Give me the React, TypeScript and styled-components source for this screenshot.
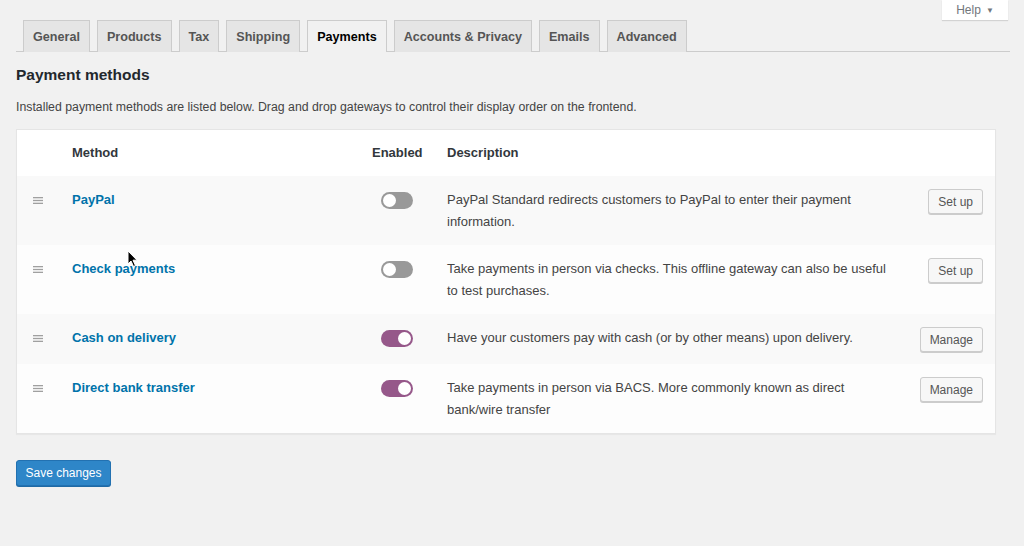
import React from "react";
import styled, { createGlobalStyle } from "styled-components";

const GlobalStyle = createGlobalStyle`
  html, body { margin: 0; padding: 0; background: #f1f1f1; }
  body {
    font-family: "Liberation Sans", Arial, sans-serif;
    font-size: 13px;
    color: #444;
    -webkit-font-smoothing: antialiased;
  }
`;

const Page = styled.div`
  position: relative;
  min-height: 546px;
  padding: 0 14px 0 16px;
  box-sizing: border-box;
`;

const TopBar = styled.div`
  display: flex;
  justify-content: flex-end;
  padding-right: 2px;
`;

const HelpTab = styled.button`
  height: 20px;
  width: 66px;
  border: none;
  background: #fff;
  box-shadow: 0 1px 1px rgba(0, 0, 0, 0.12);
  font-family: inherit;
  font-size: 12px;
  color: #72777c;
  display: flex;
  align-items: center;
  justify-content: center;
  gap: 5px;
  padding: 0;
  span { font-size: 8px; }
`;

const TabBar = styled.nav`
  display: flex;
  gap: 7px;
  padding-left: 7px;
  border-bottom: 1px solid #ccc;
  height: 31px;
`;

const Tab = styled.a<{ $active?: boolean }>`
  display: block;
  height: 32px;
  box-sizing: border-box;
  padding: 6px 9px 4px;
  line-height: 21px;
  font-size: 12.6px;
  font-weight: 700;
  border: 1px solid #ccc;
  border-bottom: none;
  background: ${(p) => (p.$active ? "#f1f1f1" : "#e5e5e5")};
  color: ${(p) => (p.$active ? "#000" : "#555")};
  text-decoration: none;
`;

const Heading = styled.h2`
  margin: 13px 0 0;
  font-size: 15.5px;
  line-height: 20px;
  font-weight: 700;
  color: #23282d;
`;

const Intro = styled.p`
  margin: 12px 0 0;
  font-size: 12.3px;
  line-height: 20px;
  color: #444;
`;

const Table = styled.div`
  margin: 12px 14px 0 0;
  background: #fff;
  border: 1px solid #e5e5e5;
  box-shadow: 0 1px 1px rgba(0, 0, 0, 0.04);
`;

const Row = styled.div<{ $shade?: "head" | "odd" | "even" }>`
  display: grid;
  grid-template-columns: 55px 300px 75px 1fr 104px;
  padding: ${(p) => (p.$shade === "head" ? "12px 0" : "13px 0 12px")};
  line-height: 22px;
  background: ${(p) =>
    p.$shade === "odd" ? "#f9f9f9" : p.$shade === "even" ? "#fdfdfd" : "#fff"};
`;

const HeadCell = styled.div`
  font-weight: 700;
  color: #32373c;
  font-size: 13px;
`;

const HandleCell = styled.div`
  display: flex;
  align-items: flex-start;
  padding-left: 16px;
  padding-top: 8px;
`;

const MethodLink = styled.a`
  color: #0073aa;
  font-weight: 700;
  font-size: 13px;
  text-decoration: none;
`;

const ToggleCell = styled.div`
  width: 50px;
  display: flex;
  align-items: flex-start;
  justify-content: center;
  padding-top: 3px;
`;

const Toggle = styled.span<{ $on: boolean }>`
  position: relative;
  display: block;
  width: 32px;
  height: 17px;
  border-radius: 9px;
  background: ${(p) => (p.$on ? "#96588a" : "#999")};
  &::after {
    content: "";
    position: absolute;
    top: 2px;
    left: ${(p) => (p.$on ? "17px" : "2px")};
    width: 13px;
    height: 13px;
    border-radius: 50%;
    background: #fff;
  }
`;

const Desc = styled.div`
  font-size: 13px;
  color: #444;
`;

const ActionCell = styled.div`
  display: flex;
  justify-content: flex-end;
  align-items: flex-start;
  padding-right: 12px;
`;

const SmallButton = styled.button`
  height: 25px;
  box-sizing: border-box;
  padding: 0 9px;
  border: 1px solid #ccc;
  border-radius: 3px;
  background: #f7f7f7;
  box-shadow: 0 1px 0 #ccc;
  font-family: inherit;
  font-size: 12px;
  color: #555;
`;

const SaveButton = styled.button`
  margin-top: 26px;
  height: 26px;
  width: 95px;
  box-sizing: border-box;
  border: 1px solid #2271b1;
  border-radius: 3px;
  background: #2e86c8;
  box-shadow: 0 1px 0 #1f6aa5;
  color: #fff;
  font-family: inherit;
  font-size: 12px;
  padding: 0;
`;

const Cursor = styled.svg`
  position: absolute;
  left: 127px;
  top: 250px;
`;

const Handle = () => (
  <svg width="10" height="7" viewBox="0 0 10 7">
    <rect x="0" y="0" width="10" height="1.3" fill="#a0a0a0" />
    <rect x="0" y="2.85" width="10" height="1.3" fill="#a0a0a0" />
    <rect x="0" y="5.7" width="10" height="1.3" fill="#a0a0a0" />
  </svg>
);

type Method = { name: string; on: boolean; desc: string; action: string };

const methods: Method[] = [
  {
    name: "PayPal",
    on: false,
    desc: "PayPal Standard redirects customers to PayPal to enter their payment information.",
    action: "Set up",
  },
  {
    name: "Check payments",
    on: false,
    desc: "Take payments in person via checks. This offline gateway can also be useful to test purchases.",
    action: "Set up",
  },
  {
    name: "Cash on delivery",
    on: true,
    desc: "Have your customers pay with cash (or by other means) upon delivery.",
    action: "Manage",
  },
  {
    name: "Direct bank transfer",
    on: true,
    desc: "Take payments in person via BACS. More commonly known as direct bank/wire transfer",
    action: "Manage",
  },
];

const tabs = [
  "General",
  "Products",
  "Tax",
  "Shipping",
  "Payments",
  "Accounts & Privacy",
  "Emails",
  "Advanced",
];

export default function App() {
  return (
    <Page>
      <GlobalStyle />
      <TopBar>
        <HelpTab>
          Help <span>▼</span>
        </HelpTab>
      </TopBar>
      <TabBar>
        {tabs.map((t) => (
          <Tab key={t} $active={t === "Payments"}>
            {t}
          </Tab>
        ))}
      </TabBar>
      <Heading>Payment methods</Heading>
      <Intro>
        Installed payment methods are listed below. Drag and drop gateways to control their
        display order on the frontend.
      </Intro>
      <Table>
        <Row $shade="head">
          <div />
          <HeadCell>Method</HeadCell>
          <HeadCell>Enabled</HeadCell>
          <HeadCell>Description</HeadCell>
          <div />
        </Row>
        {methods.map((m, i) => (
          <Row key={m.name} $shade={i % 2 === 0 ? "odd" : "even"}>
            <HandleCell>
              <Handle />
            </HandleCell>
            <div>
              <MethodLink href="#">{m.name}</MethodLink>
            </div>
            <ToggleCell>
              <Toggle $on={m.on} />
            </ToggleCell>
            <Desc>{m.desc}</Desc>
            <ActionCell>
              <SmallButton>{m.action}</SmallButton>
            </ActionCell>
          </Row>
        ))}
      </Table>
      <SaveButton>Save changes</SaveButton>
      <Cursor width="12" height="18" viewBox="0 0 12 18">
        <path d="M1 1 L1 14 L4 11 L6.5 16.5 L8.5 15.6 L6 10.2 L10 10.2 Z" fill="#000" stroke="#fff" strokeWidth="1" />
      </Cursor>
    </Page>
  );
}
